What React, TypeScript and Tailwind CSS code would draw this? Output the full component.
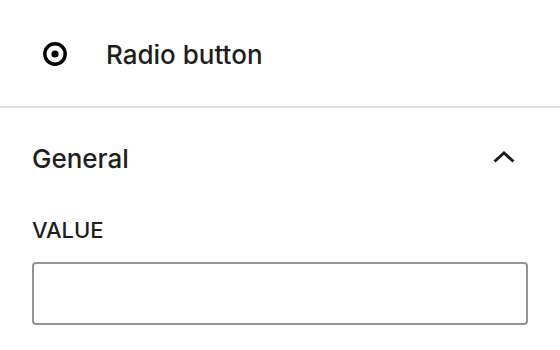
export default function App() {
  return (
    <div className="w-[560px] h-[350px] bg-white text-[#1e1e1e] font-['Inter',sans-serif] overflow-hidden">
      {/* block card */}
      <div className="flex items-center h-[108px] pl-[43px] border-b-2 border-[#e0e0e0]">
        <svg width="24" height="24" viewBox="0 0 24 24" className="shrink-0 mt-[2px]">
          <circle cx="12" cy="12" r="10.2" fill="none" stroke="#000" strokeWidth="3.4" />
          <circle cx="12" cy="12" r="3.6" fill="#000" />
        </svg>
        <span className="ml-[39px] mt-[3px] text-[26px] leading-none font-medium">Radio button</span>
      </div>

      {/* panel */}
      <div className="px-[32px]">
        <div className="flex items-center justify-between pt-[33px]">
          <span className="text-[26px] leading-[36px] font-medium">General</span>
          <svg width="22" height="12" viewBox="0 0 22 12" className="mr-[13px] mb-[4px]">
            <path d="M1.5 10.5 L11 2 L20.5 10.5" fill="none" stroke="#1e1e1e" strokeWidth="3" />
          </svg>
        </div>
        <label className="block mt-[42px] text-[22px] leading-none font-medium uppercase">Value</label>
        <input
          type="text"
          className="block w-full mt-[21px] h-[63px] border-2 border-[#949494] rounded-[4px] outline-none"
        />
      </div>
    </div>
  );
}
